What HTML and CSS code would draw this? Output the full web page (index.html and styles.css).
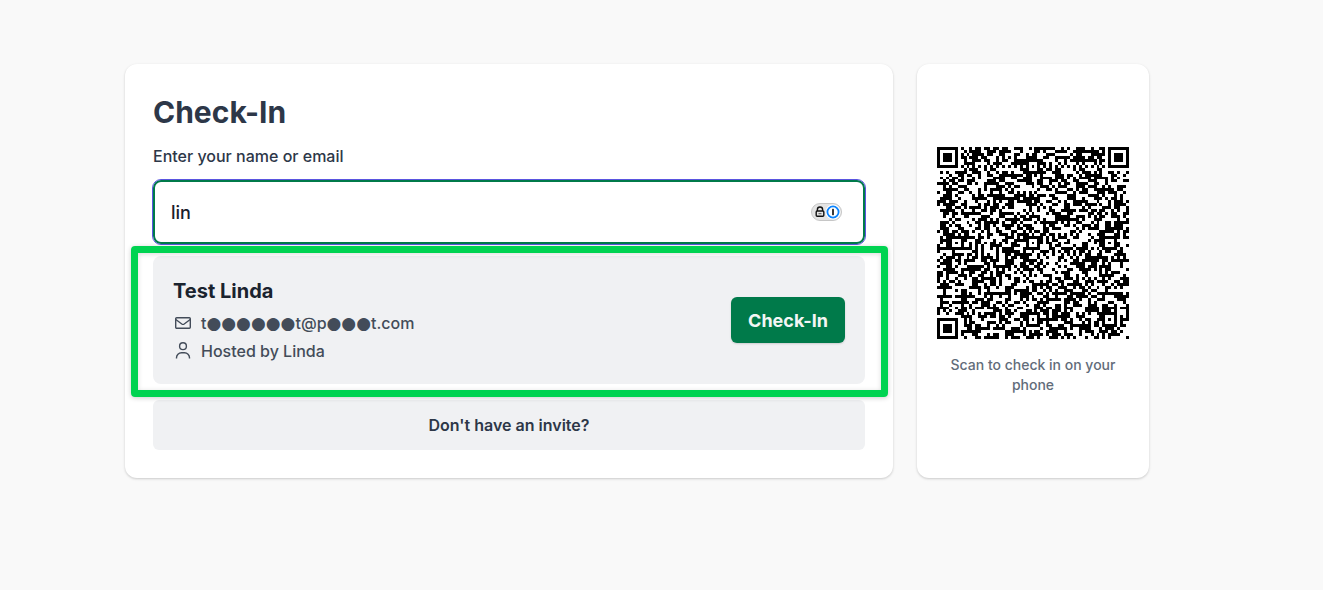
FILE: index.html
```
<!DOCTYPE html>
<html lang="en">
<head>
  <meta charset="UTF-8" />
  <meta name="viewport" content="width=device-width, initial-scale=1.0"/>
  <title>Check-In</title>
  <link rel="stylesheet" href="styles.css">
</head>
<body>

<main class="layout">
  <section class="card checkin">
    <h1>Check-In</h1>
    <label for="guest">Enter your name or email</label>
    <div class="field">
      <input type="text" id="guest" value="lin" autocomplete="off">
      <svg class="badge" width="32" height="18" viewBox="0 0 32 18" aria-hidden="true">
        <rect x="0.5" y="0.5" width="30" height="17" rx="8.5" fill="#e4e4e4" stroke="#c6c6c6"/>
        <path d="M6.4 8V6.6a2.6 2.6 0 0 1 5.2 0V8" fill="none" stroke="#111" stroke-width="1.4"/>
        <rect x="5.2" y="8" width="7.6" height="5.2" rx="1" fill="#e4e4e4" stroke="#111" stroke-width="1.4"/>
        <path d="M7.5 10.7h3" stroke="#555" stroke-width="1"/>
        <circle cx="22" cy="9" r="7.5" fill="#fff"/>
        <circle cx="22" cy="9" r="5.6" fill="#fff" stroke="#0a84ff" stroke-width="1.8"/>
        <rect x="21.1" y="5.8" width="1.8" height="6.4" rx="0.4" fill="#222"/>
      </svg>
    </div>

    <div class="result">
      <div class="guest">
        <h2>Test Linda</h2>
        <p>
          <svg width="20" height="20" viewBox="0 0 20 20" aria-hidden="true"><rect x="2.7" y="4.7" width="14.6" height="10.6" rx="1"/><path d="M2.8 6.5 8.8 11q1.2.8 2.4 0l6-4.5"/></svg>
          <span>t<span class="dots">●●●●●●</span>t@p<span class="dots">●●●</span>t.com</span>
        </p>
        <p>
          <svg width="20" height="20" viewBox="0 0 20 20" aria-hidden="true"><circle cx="10" cy="5.2" r="3.4"/><path d="M3.5 17.5v-.8a5 5 0 0 1 5-5h3a5 5 0 0 1 5 5v.8"/></svg>
          <span>Hosted by Linda</span>
        </p>
      </div>
      <button type="button" class="primary">Check-In</button>
      <div class="highlight"></div>
    </div>

    <button type="button" class="secondary">Don't have an invite?</button>
  </section>

  <aside class="card scan">
    <svg id="qr" viewBox="0 0 65 65" role="img" aria-label="QR code"><path/></svg>
    <p>Scan to check in on your phone</p>
  </aside>
</main>

<script>
const SIZE = 65;
const finders = [[3, 3], [61, 3], [3, 61]];
const aligns = [[32, 6], [6, 32], [32, 32], [58, 32], [32, 58], [58, 58]];
let seed = 20712;

function random() {
  seed = (seed + 0x6D2B79F5) | 0;
  let t = Math.imul(seed ^ (seed >>> 15), 1 | seed);
  t = (t + Math.imul(t ^ (t >>> 7), 61 | t)) ^ t;
  return ((t ^ (t >>> 14)) >>> 0) / 4294967296;
}

function isDark(x, y) {
  const fill = random() < 0.52;
  for (const [cx, cy] of finders) {
    const d = Math.max(Math.abs(x - cx), Math.abs(y - cy));
    if (d <= 4) return d !== 2 && d !== 4;
  }
  for (const [cx, cy] of aligns) {
    const d = Math.max(Math.abs(x - cx), Math.abs(y - cy));
    if (d <= 2) return d !== 1;
  }
  if (x === 6 || y === 6) return (x + y) % 2 === 0;
  return fill;
}

let path = '';
for (let y = 0; y < SIZE; y++) {
  for (let x = 0; x < SIZE; x++) {
    if (isDark(x, y)) path += `M${x} ${y}h1v1h-1z`;
  }
}
document.querySelector('#qr path').setAttribute('d', path);
</script>

</body>
</html>
```
FILE: styles.css
```
* { box-sizing: border-box; }
body { margin: 0; padding: 64px 49px 64px 0; background: #f9f9f9; color: #2d3748; font-family: Inter, "Liberation Sans", sans-serif; font-size: 16px; font-weight: 500; }
h1, h2, p { margin: 0; }
button, input { font-family: inherit; }

.layout { display: grid; grid-template-columns: 1fr 232px; gap: 24px; max-width: 1024px; margin: 0 auto; }
.card { background: #fff; border-radius: 12px; box-shadow: 0 1px 3px rgba(0,0,0,0.14), 0 1px 2px rgba(0,0,0,0.06); }

.checkin { display: flex; flex-direction: column; padding: 28px; }
h1 { font-size: 30px; line-height: 40px; font-weight: 700; }
label { margin: 12px 0; line-height: 24px; }
.field { position: relative; }
.field input { display: block; width: 100%; height: 64px; padding: 0 16px; border: 2px solid #007a4a; border-radius: 8px; outline: 1px solid #5a55e0; background: #fff; color: #1a202c; font-size: 18px; font-weight: 500; }
.badge { position: absolute; top: 23px; right: 22px; }

.result { position: relative; display: flex; align-items: center; justify-content: space-between; margin: 12px 0 16px; padding: 19px 20px; border-radius: 8px; background: #f0f1f3; }
.guest { padding-top: 2px; }
h2 { margin-bottom: 4px; color: #1a232e; font-size: 20px; line-height: 28px; font-weight: 700; }
.guest p { display: flex; align-items: center; gap: 8px; height: 28px; color: #434c59; }
.guest svg { flex: none; fill: none; stroke: #434c59; stroke-width: 1.4; }
.dots { font-family: "DejaVu Sans", sans-serif; font-size: 17px; line-height: 20px; }
.primary { height: 46px; padding: 0 17px; border: 0; border-radius: 6px; background: #007a4a; color: #f3f6f5; font-size: 18px; font-weight: 700; box-shadow: 0 1px 2px rgba(0,0,0,0.15); }
.highlight { position: absolute; inset: -10px -23px -13px -22px; border: 7px solid #00d351; border-radius: 4px; box-shadow: 0 1px 5px rgba(0,0,0,0.2), inset 0 1px 5px rgba(0,0,0,0.15); pointer-events: none; }
.secondary { height: 50px; border: 0; border-radius: 6px; background: #f0f1f3; color: #2d3748; font-size: 16px; font-weight: 600; }

.scan { display: flex; flex-direction: column; align-items: center; justify-content: center; gap: 16px; padding: 20px; }
.scan svg { width: 100%; shape-rendering: crispEdges; }
.scan p { color: #626c7a; font-size: 14px; line-height: 20px; text-align: center; }

@media (max-width: 800px) {
  body { padding: 24px; }
  .layout { grid-template-columns: 1fr; }
  .scan svg { max-width: 192px; }
}
```
